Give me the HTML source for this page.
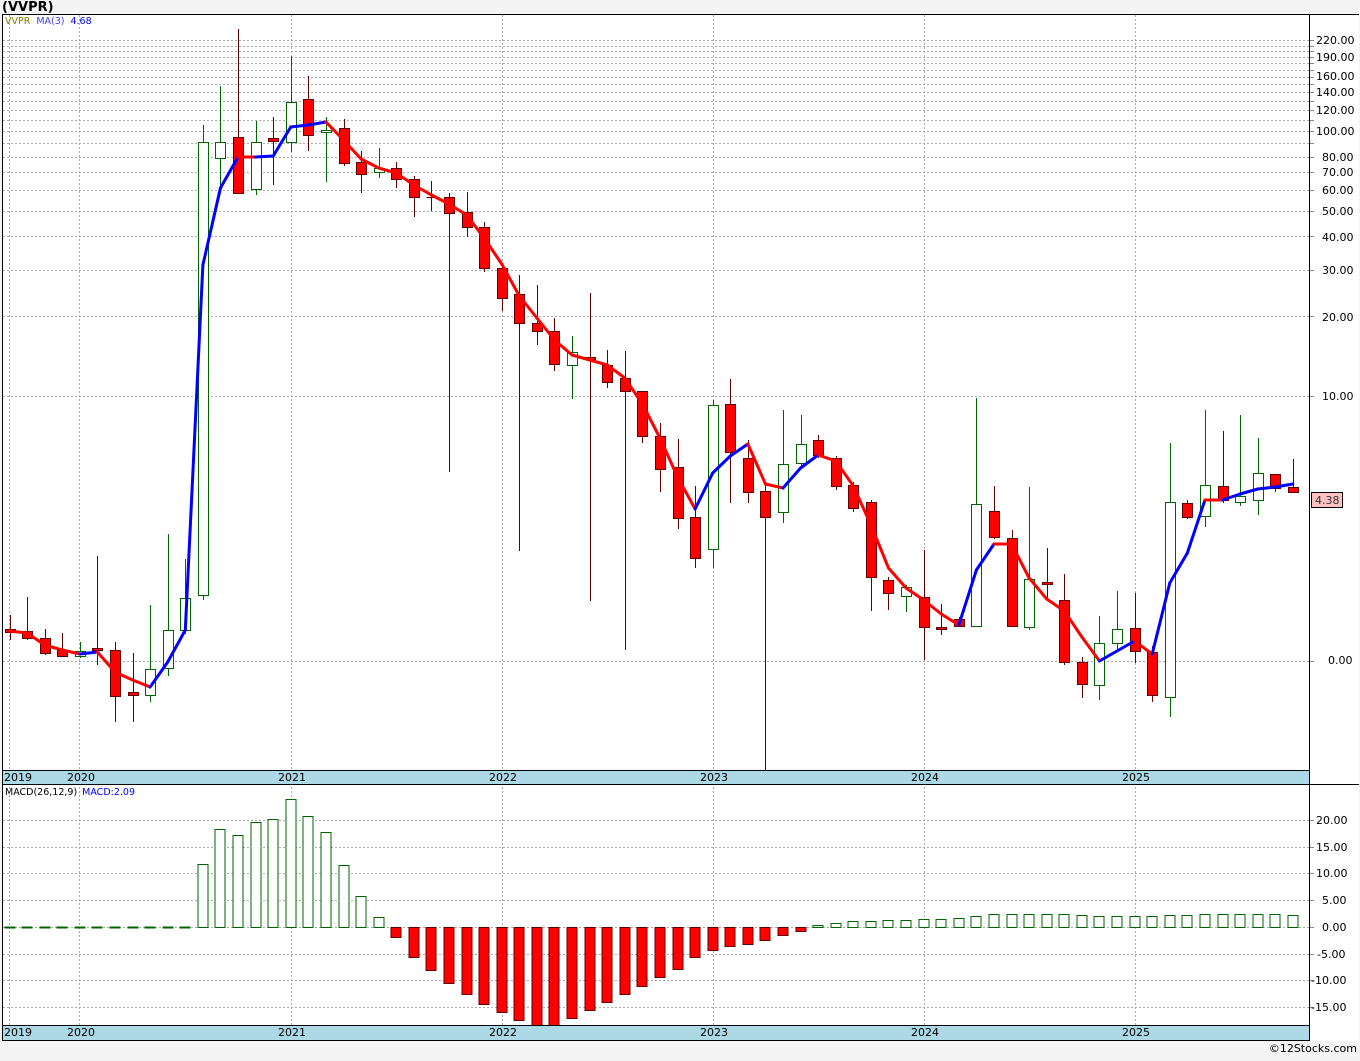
<!DOCTYPE html>
<html><head><meta charset="utf-8"><style>
html,body{margin:0;padding:0;background:#f4f4f4;}
body{width:1360px;height:1056px;overflow:hidden;font-family:"Liberation Sans","DejaVu Sans",sans-serif;}
svg text{font-family:"DejaVu Sans","Liberation Sans",sans-serif;}
</style></head><body>
<svg id="s" width="1360" height="1056" xmlns="http://www.w3.org/2000/svg">
<rect x="0" y="0" width="1360" height="1056" fill="#f4f4f4"/>
<text x="2" y="11" font-size="13" font-weight="bold" fill="#000">(VVPR)</text>
<rect x="2" y="14" width="1357" height="1027" fill="#fff"/>
<g id="grid"></g>
<rect x="2" y="770" width="1307" height="14" fill="#add8e6"/>
<rect x="2" y="1025" width="1307" height="15" fill="#add8e6"/>
<g id="candles"></g>
<g font-size="11" fill="#000">
<text x="4" y="781">2019</text><text x="67" y="781">2020</text><text x="278" y="781">2021</text><text x="489" y="781">2022</text><text x="700" y="781">2023</text><text x="911" y="781">2024</text><text x="1122" y="781">2025</text>
<text x="4" y="1036">2019</text><text x="67" y="1036">2020</text><text x="278" y="1036">2021</text><text x="489" y="1036">2022</text><text x="700" y="1036">2023</text><text x="911" y="1036">2024</text><text x="1122" y="1036">2025</text>
</g>
<g font-size="11" fill="#000">
<text x="1316" y="44">220.00</text><text x="1316" y="61">190.00</text><text x="1316" y="80">160.00</text><text x="1316" y="96">140.00</text><text x="1316" y="114">120.00</text><text x="1316" y="135">100.00</text><text x="1322" y="161">80.00</text><text x="1322" y="176">70.00</text><text x="1322" y="194">60.00</text><text x="1322" y="215">50.00</text><text x="1322" y="241">40.00</text><text x="1322" y="274">30.00</text><text x="1322" y="321">20.00</text><text x="1322" y="400">10.00</text><text x="1328" y="664">0.00</text>
<text x="1316" y="824">20.00</text><text x="1316" y="851">15.00</text><text x="1316" y="877">10.00</text><text x="1322" y="904">5.00</text><text x="1322" y="931">0.00</text><text x="1317" y="958">-5.00</text><text x="1311" y="984">-10.00</text><text x="1311" y="1011">-15.00</text>
</g>
<rect x="1311.5" y="492.5" width="31" height="15" fill="#ffc0c0" stroke="#000"/>
<text x="1315" y="504" font-size="11" fill="#333">4.38</text>
<text x="5" y="24" font-size="9.5"><tspan fill="#808000">VVPR</tspan><tspan fill="#4040ff" dx="6">MA(3)</tspan><tspan fill="#0000ff" dx="6">4.68</tspan></text>
<text x="5" y="795" font-size="9.5"><tspan fill="#000">MACD(26,12,9)</tspan><tspan fill="#0000ff" dx="5">MACD:2.09</tspan></text>
<g stroke="#000" fill="none">
<line x1="2" y1="14.5" x2="1359" y2="14.5"/>
<line x1="2.5" y1="14" x2="2.5" y2="1041"/>
<line x1="1309.5" y1="14" x2="1309.5" y2="1041"/>
<line x1="2" y1="770.5" x2="1309" y2="770.5"/>
<line x1="2" y1="784.5" x2="1359" y2="784.5"/>
<line x1="2" y1="1025.5" x2="1309" y2="1025.5"/>
<line x1="2" y1="1040.5" x2="1309" y2="1040.5"/>
</g>
<text x="1357" y="1052" font-size="11" text-anchor="end" fill="#000">©12Stocks.com</text>
</svg>
<script>
var NS="http://www.w3.org/2000/svg";
function el(p,t,a){var e=document.createElementNS(NS,t);for(var k in a)e.setAttribute(k,a[k]);p.appendChild(e);return e;}
var g=document.getElementById('grid'),c=document.getElementById('candles');
function py(p){return 661-265*Math.log10(p);}
var pr=[220,210,200,190,180,170,160,150,140,130,120,110,100,90,80,70,60,50,40,30,20,10,1];
pr.forEach(function(p){var y=Math.round(py(p))+.5;el(g,'line',{x1:3,y1:y,x2:1309,y2:y,stroke:'#aaa','stroke-dasharray':'2,2'});el(g,'line',{x1:1309,y1:y,x2:1314,y2:y,stroke:'#888'});});
[820,847,873,900,927,954,980,1007].forEach(function(y){y+=.5;el(g,'line',{x1:3,y1:y,x2:1309,y2:y,stroke:'#aaa','stroke-dasharray':'2,2'});el(g,'line',{x1:1309,y1:y,x2:1314,y2:y,stroke:'#888'});});
[9.5,79.5,291.5,502.5,713.5,924.5,1135.5].forEach(function(x){el(g,'line',{x1:x,y1:15,x2:x,y2:1025,stroke:'#aaa','stroke-dasharray':'2,2'});});
// type,top,bot,hi,lo  (1 = up/green hollow, 0 = red)
var d=[[0,629,632,615,640],[0,631,638,597,640],[0,638,653,629,655],[0,650,656,633,656],[1,651,656,642,658],[0,648,650,556,665],[0,650,696,642,722],[0,692,695,653,722],[1,669,695,605,702],[1,630,668,534,676],[1,598,630,559,634],[1,142,595,125,600],[1,142,158,86,187],[0,137,193,29,193],[1,142,189,121,195],[0,138,141,117,185],[1,102,142,56,152],[0,99,135,76,151],[1,130,132,117,182],[0,128,163,119,166],[0,162,174,151,193],[1,168,172,148,178],[0,168,179,162,188],[0,179,197,176,217],[2,197,197,181,211],[0,197,213,193,472],[0,212,227,192,237],[0,227,268,222,272],[0,268,298,263,311],[0,294,323,275,551],[0,323,331,285,345],[0,331,364,318,371],[1,352,365,336,399],[0,357,359,293,601],[0,365,382,350,388],[0,378,391,351,650],[0,391,436,391,443],[0,436,469,423,492],[0,467,518,439,529],[0,517,558,486,568],[1,405,549,400,568],[0,404,452,379,503],[0,458,492,440,503],[0,491,517,484,770],[1,464,512,410,523],[1,444,463,415,468],[0,440,455,435,458],[0,458,486,456,490],[0,485,508,482,512],[0,502,577,500,611],[0,580,593,577,610],[1,587,596,585,612],[0,597,627,550,660],[0,627,629,604,635],[0,619,626,617,627],[1,504,626,398,627],[0,511,537,486,539],[0,538,626,530,627],[1,579,627,487,630],[0,582,584,548,600],[0,600,662,574,665],[0,662,684,657,698],[1,643,685,616,700],[1,629,643,591,649],[0,628,651,593,663],[0,652,695,646,702],[1,502,697,443,717],[0,503,517,500,519],[1,485,516,410,527],[0,486,500,431,503],[1,496,502,415,506],[1,473,500,438,515],[0,474,488,474,492],[0,487,492,459,493]];
var ma=[631,633,645,650,654,652,672,680,687,662,630,265,188,157,157,156,127,125,122,140,159,168,173,185,195,204,215,238,264,296,318,340,355,360,365,378,404,438,477,509,473,456,444,484,488,468,455,461,486,525,568,588,600,614,625,570,544,544,578,599,611,637,661,651,641,654,583,553,500,500,494,489,487,484];
var mc=[927,927,927,927,927,927,927,927,927,927,927,864,829,835,822,819,799,816,832,865,896,917,937,957,970,983,994,1004,1012,1020,1025,1025,1018,1010,1002,994,986,977,969,957,950,946,944,940,935,931,925,923,921,921,920,920,919,919,918,916,914,914,914,914,914,915,916,916,916,916,915,915,914,914,914,914,914,915];
function X(i){return 9.5+17.58*i;}
d.forEach(function(r,i){var x=Math.round(X(i))+.5;var col=r[0]==1?'#006400':'#600000';
el(c,'line',{x1:x,y1:r[3],x2:x,y2:r[4],stroke:col});
if(r[0]==2){el(c,'line',{x1:x-5,y1:r[1]+.5,x2:x+5,y2:r[1]+.5,stroke:col});}
else el(c,'rect',{x:x-5,y:r[1]+.5,width:10,height:Math.max(r[2]-r[1],1),fill:r[0]==1?'#fff':'#ff0000',stroke:col});
});
for(var i=1;i<ma.length;i++){el(c,'line',{x1:X(i-1),y1:ma[i-1],x2:X(i),y2:ma[i],stroke:ma[i]<ma[i-1]?'#0000ff':'#ff0000','stroke-width':3,'stroke-linecap':'round'});}
mc.forEach(function(y,i){var x=Math.round(X(i))-5.5;
if(y==927){el(c,'line',{x1:x,y1:927.5,x2:x+11,y2:927.5,stroke:'#006400','stroke-width':2});return;}
if(y<927)el(c,'rect',{x:x+.5,y:y+.5,width:10,height:927-y,fill:'#fff',stroke:'#006400'});
else el(c,'rect',{x:x+.5,y:927.5,width:10,height:y-927,fill:'#ff0000',stroke:'#600000'});
});
</script>
</body></html>
